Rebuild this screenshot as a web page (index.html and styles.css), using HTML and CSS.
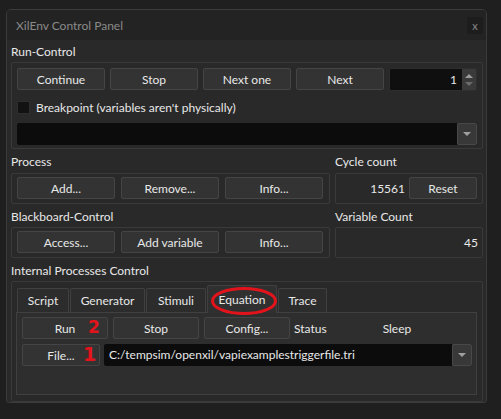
FILE: index.html
```html
<!DOCTYPE html>
<html>
<head>
<meta charset="utf-8">
<link rel="stylesheet" href="styles.css">
</head>
<body>
<div class="window">
  <div class="titlebar">
    <span class="title">XilEnv Control Panel</span>
    <span class="close">x</span>
  </div>
  <div class="content">
    <div class="label first">Run-Control</div>
    <div class="frame run-frame">
      <div class="row5">
        <div class="btn">Continue</div>
        <div class="btn">Stop</div>
        <div class="btn">Next one</div>
        <div class="btn">Next</div>
        <div class="spin">
          <div class="spin-val">1</div>
          <div class="spin-btns">
            <svg width="14" height="22" viewBox="0 0 14 22"><path d="M3 9 L7 5 L11 9 Z" fill="#9a9a9a"/><path d="M3 13 L11 13 L7 17 Z" fill="#6a6a6a"/></svg>
          </div>
        </div>
      </div>
      <div class="check-row">
        <span class="checkbox"></span>
        <span>Breakpoint (variables aren't physically)</span>
      </div>
      <div class="combo">
        <div class="combo-text"></div>
        <div class="combo-btn"><svg width="10" height="6" viewBox="0 0 10 6"><path d="M1 1 L9 1 L5 5 Z" fill="#a0a0a0"/></svg></div>
      </div>
    </div>

    <div class="split">
      <div class="col">
        <div class="label tall">Process</div>
        <div class="frame btn-frame">
          <div class="row3">
            <div class="btn">Add...</div>
            <div class="btn">Remove...</div>
            <div class="btn">Info...</div>
          </div>
        </div>
        <div class="label">Blackboard-Control</div>
        <div class="frame btn-frame">
          <div class="row3">
            <div class="btn">Access...</div>
            <div class="btn">Add variable</div>
            <div class="btn">Info...</div>
          </div>
        </div>
      </div>
      <div class="col">
        <div class="label tall">Cycle count</div>
        <div class="frame btn-frame cycle">
          <span class="num">15561</span>
          <div class="btn reset">Reset</div>
        </div>
        <div class="label">Variable Count</div>
        <div class="frame btn-frame varcount">
          <span class="num">45</span>
        </div>
      </div>
    </div>

    <div class="label">Internal Processes Control</div>
    <div class="frame ipc">
      <div class="tabs">
        <div class="tab t-script">Script</div>
        <div class="tab t-gen">Generator</div>
        <div class="tab t-stim">Stimuli</div>
        <div class="tab t-eq active">Equation</div>
        <div class="tab t-trace">Trace</div>
        <svg class="ring" width="70" height="32" viewBox="0 0 70 32"><ellipse cx="34" cy="15" rx="31.5" ry="12.5" fill="none" stroke="#e3131c" stroke-width="3"/></svg>
      </div>
      <div class="pane">
        <div class="pane-row">
          <div class="btn pbtn">Run<span class="mark m2">2</span></div>
          <div class="btn pbtn">Stop</div>
          <div class="btn pbtn">Config...</div>
          <span class="status">Status</span>
          <span class="sleep">Sleep</span>
        </div>
        <div class="pane-row">
          <div class="btn filebtn">File...<span class="mark m1">1</span></div>
          <div class="combo path">
            <div class="combo-text">C:/tempsim/openxil/vapiexamplestriggerfile.tri</div>
            <div class="combo-btn"><svg width="10" height="6" viewBox="0 0 10 6"><path d="M1 1 L9 1 L5 5 Z" fill="#a0a0a0"/></svg></div>
          </div>
        </div>
      </div>
    </div>
  </div>
</div>
</body>
</html>
```
FILE: styles.css
```css
* { box-sizing: border-box; }
html, body { margin: 0; padding: 0; }
body {
  background: #1f1f1f;
  font-family: "Lato", "Open Sans", sans-serif;
  font-size: 12px;
  color: #e8e8e8;
  width: 501px;
  height: 419px;
  overflow: hidden;
}
.window {
  margin: 9px 0 0 6px;
  width: 481px;
  height: 394px;
  border: 1px solid #3b3b3b;
  border-radius: 5px 5px 3px 3px;
  background: #292929;
  overflow: hidden;
  display: flex;
  flex-direction: column;
}
.titlebar {
  height: 30px;
  background: #232323;
  display: flex;
  align-items: center;
  padding-left: 9px;
  flex: none;
}
.title { color: #8a8a8a; font-size: 12px; }
.close {
  margin-left: auto;
  margin-right: 3px;
  width: 16px;
  height: 17px;
  background: #1d1d1d;
  color: #8a8a8a;
  font-size: 11px;
  display: flex;
  align-items: center;
  justify-content: center;
  line-height: 1;
}
.content { padding: 0 3px 0 4px; }
.label {
  height: 23px;
  line-height: 20px;
  padding-top: 3px;
  white-space: nowrap;
}
.label.first { height: 22px; padding-top: 2px; }
.label.tall { height: 24px; }
.frame {
  border: 1px solid #3a3a3a;
  border-radius: 2px;
}
.run-frame { padding: 5px 5px 3px 5px; }
.btn {
  height: 22px;
  background: #333333;
  border: 1px solid #454545;
  border-radius: 2px;
  display: flex;
  align-items: center;
  justify-content: center;
  white-space: nowrap;
  position: relative;
}
.row5 {
  display: grid;
  grid-template-columns: repeat(5, 88px);
  column-gap: 5px;
}
.spin {
  height: 23px;
  display: flex;
  border: 1px solid #2e2e2e;
  border-radius: 2px;
  overflow: hidden;
}
.spin-val {
  flex: 1;
  background: #0f0f0f;
  text-align: right;
  padding-right: 5px;
  line-height: 21px;
}
.spin-btns {
  width: 14px;
  background: #3a3a3a;
  display: flex;
}
.check-row {
  height: 23px;
  margin-top: 5px;
  display: flex;
  align-items: center;
  gap: 6px;
}
.checkbox {
  width: 13px;
  height: 13px;
  background: #121212;
  border: 1px solid #2e2e2e;
}
.combo {
  height: 22px;
  margin-top: 4px;
  display: flex;
  border-radius: 2px;
  overflow: hidden;
}
.combo-text {
  flex: 1;
  background: #0c0c0c;
  padding-left: 5px;
  line-height: 22px;
  white-space: nowrap;
  overflow: hidden;
}
.combo-btn {
  width: 20px;
  background: #383838;
  border: 1px solid #484848;
  border-radius: 2px;
  display: flex;
  align-items: center;
  justify-content: center;
}
.split {
  display: grid;
  grid-template-columns: 319px 148px;
  column-gap: 5px;
}
.col { display: flex; flex-direction: column; }
.btn-frame { height: 31px; padding: 3px 6px 4px 5px; }
.row3 {
  display: grid;
  grid-template-columns: repeat(3, 98px);
  column-gap: 6px;
}
.cycle {
  display: flex;
  align-items: center;
  justify-content: flex-end;
  padding-right: 5px;
}
.cycle .num { margin-right: 4px; }
.reset { width: 68px; }
.varcount {
  display: flex;
  align-items: center;
  justify-content: flex-end;
  padding-right: 4px;
}
.ipc {
  height: 121px;
  padding: 4px 5px 5px 4px;
}
.tabs {
  display: flex;
  align-items: flex-end;
  height: 26px;
  padding-left: 1px;
  gap: 1px;
  position: relative;
}
.tab {
  height: 24px;
  background: #2c2c2c;
  border: 1px solid #404040;
  border-bottom: none;
  border-radius: 2px 2px 0 0;
  display: flex;
  align-items: center;
  justify-content: center;
  white-space: nowrap;
}
.t-script { width: 52px; }
.t-gen { width: 75px; }
.t-stim { width: 60px; }
.t-eq { width: 70px; }
.t-trace { width: 49px; }
.tab.active {
  height: 28px;
  margin-bottom: -1px;
  background: #303030;
  position: relative;
  z-index: 1;
}
.ring {
  position: absolute;
  left: 194px;
  top: 0px;
  z-index: 2;
}
.pane {
  height: 83px;
  border: 1px solid #404040;
  background: #2e2e2e;
  padding: 4px 4px 0 5px;
}
.pane-row {
  display: flex;
  align-items: center;
  height: 22px;
  margin-bottom: 5px;
}
.pbtn { width: 86px; margin-right: 5px; }
.status { margin-left: -1px; }
.sleep { margin-left: 56px; }
.filebtn { width: 78px; margin-right: 4px; }
.path { flex: 1; margin-top: 0; }
.mark {
  position: absolute;
  color: #e3131c;
  font-family: "DejaVu Sans", sans-serif;
  font-weight: bold;
  line-height: 1;
}
.m2 { left: 65px; top: 1px; font-size: 17px; }
.m1 { left: 60px; top: 0px; font-size: 19px; }
```
